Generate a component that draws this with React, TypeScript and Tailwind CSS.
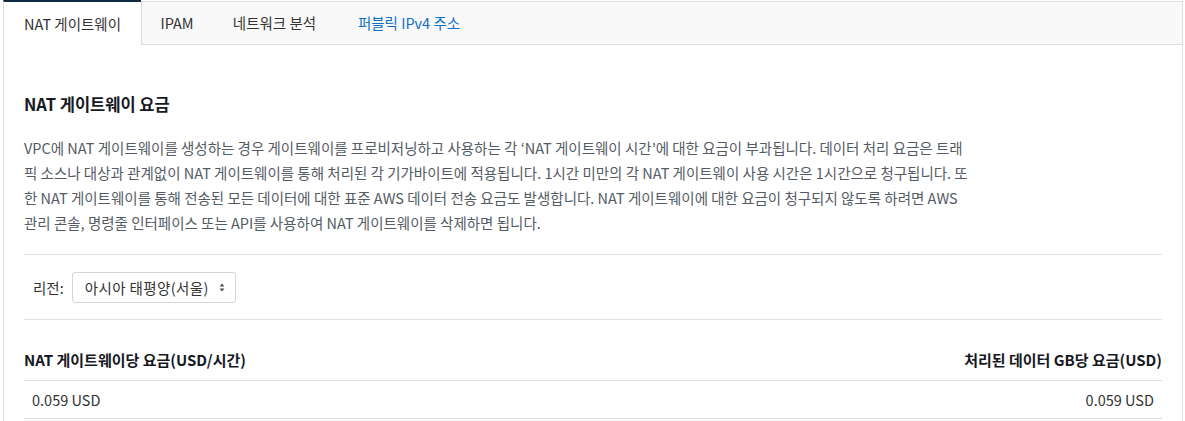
import { ReactNode } from "react";

const font = { fontFamily: '"Noto Sans CJK KR", "Noto Sans", sans-serif' };

const Tab = ({ children, width, active, blue }: { children: ReactNode; width: string; active?: boolean; blue?: boolean }) => {
    if (active) {
        return (
            <div className={`${width} h-[45px] shrink-0 flex items-center justify-center bg-white border-t-2 border-l border-t-[#0e2a47] border-l-[#dddddd] text-[14.5px] text-[#333333]`}>
                {children}
            </div>
        );
    }
    return (
        <div className={`${width} h-full shrink-0 flex items-center justify-center text-[14.5px] ${blue ? "text-[#0f6fc6]" : "text-[#333333]"}`}>
            {children}
        </div>
    );
};

const SortIcon = () => (
    <svg width="6" height="9" viewBox="0 0 6 9" className="text-[#555]">
        <path d="M3 0.5 L5.5 3.5 H0.5 Z" fill="currentColor" />
        <path d="M3 8.5 L5.5 5.5 H0.5 Z" fill="currentColor" />
    </svg>
);

export default function App() {
    return (
        <div className="w-[1185px] h-[421px] bg-white overflow-hidden" style={font}>
            <div className="ml-[3px] w-[1180px]">
                {/* 탭 */}
                <div className="flex h-[45px]">
                    <Tab width="w-[138px]" active>
                        NAT 게이트웨이
                    </Tab>
                    <div className="flex-1 flex mt-[1px] h-[44px] bg-[#f9f9f9] border border-[#dddddd]">
                        <Tab width="w-[70px]">IPAM</Tab>
                        <Tab width="w-[125px]">네트워크 분석</Tab>
                        <Tab width="w-[144px]" blue>
                            퍼블릭 IPv4 주소
                        </Tab>
                    </div>
                </div>

                {/* 본문 */}
                <div className="border-l border-r border-[#dddddd] px-5 h-[376px]">
                    <h2 className="pt-[49px] text-[16.5px] leading-[20px] font-bold text-[#16191f]">
                        NAT 게이트웨이 요금
                    </h2>
                    <p className="mt-[21px] text-[14.5px] leading-[25px] text-[#545b64] whitespace-nowrap">
                        VPC에 NAT 게이트웨이를 생성하는 경우 게이트웨이를 프로비저닝하고 사용하는 각 ‘NAT 게이트웨이 시간’에 대한 요금이 부과됩니다. 데이터 처리 요금은 트래
                        <br />
                        픽 소스나 대상과 관계없이 NAT 게이트웨이를 통해 처리된 각 기가바이트에 적용됩니다. 1시간 미만의 각 NAT 게이트웨이 사용 시간은 1시간으로 청구됩니다. 또
                        <br />
                        한 NAT 게이트웨이를 통해 전송된 모든 데이터에 대한 표준 AWS 데이터 전송 요금도 발생합니다. NAT 게이트웨이에 대한 요금이 청구되지 않도록 하려면 AWS
                        <br />
                        관리 콘솔, 명령줄 인터페이스 또는 API를 사용하여 NAT 게이트웨이를 삭제하면 됩니다.
                    </p>

                    <div className="mt-[19px] border-t border-[#e1e1e1]" />

                    {/* 리전 선택 */}
                    <div className="flex items-center mt-[17px] pl-[9px] h-[31px]">
                        <span className="text-[14.5px] text-[#333333] mr-2">리전:</span>
                        <div className="w-[164px] h-[31px] border border-[#d5d5d5] rounded-[3px] flex items-center pl-3 pr-[10px] justify-between">
                            <span className="text-[14.5px] text-[#333333] tracking-[0.4px]">아시아 태평양(서울)</span>
                            <SortIcon />
                        </div>
                    </div>

                    <div className="mt-[16px] border-t border-[#e1e1e1]" />

                    {/* 요금 표 */}
                    <div className="mt-[30px] flex justify-between border-b border-[#dddddd] pb-[10px] text-[15px] leading-[20px] font-bold text-[#16191f]">
                        <span>NAT 게이트웨이당 요금(USD/시간)</span>
                        <span>처리된 데이터 GB당 요금(USD)</span>
                    </div>
                    <div className="flex justify-between border-b border-[#dddddd] h-[38px] items-center px-2 text-[14.5px] text-[#333333]">
                        <span>0.059 USD</span>
                        <span>0.059 USD</span>
                    </div>
                </div>
            </div>
        </div>
    );
}
